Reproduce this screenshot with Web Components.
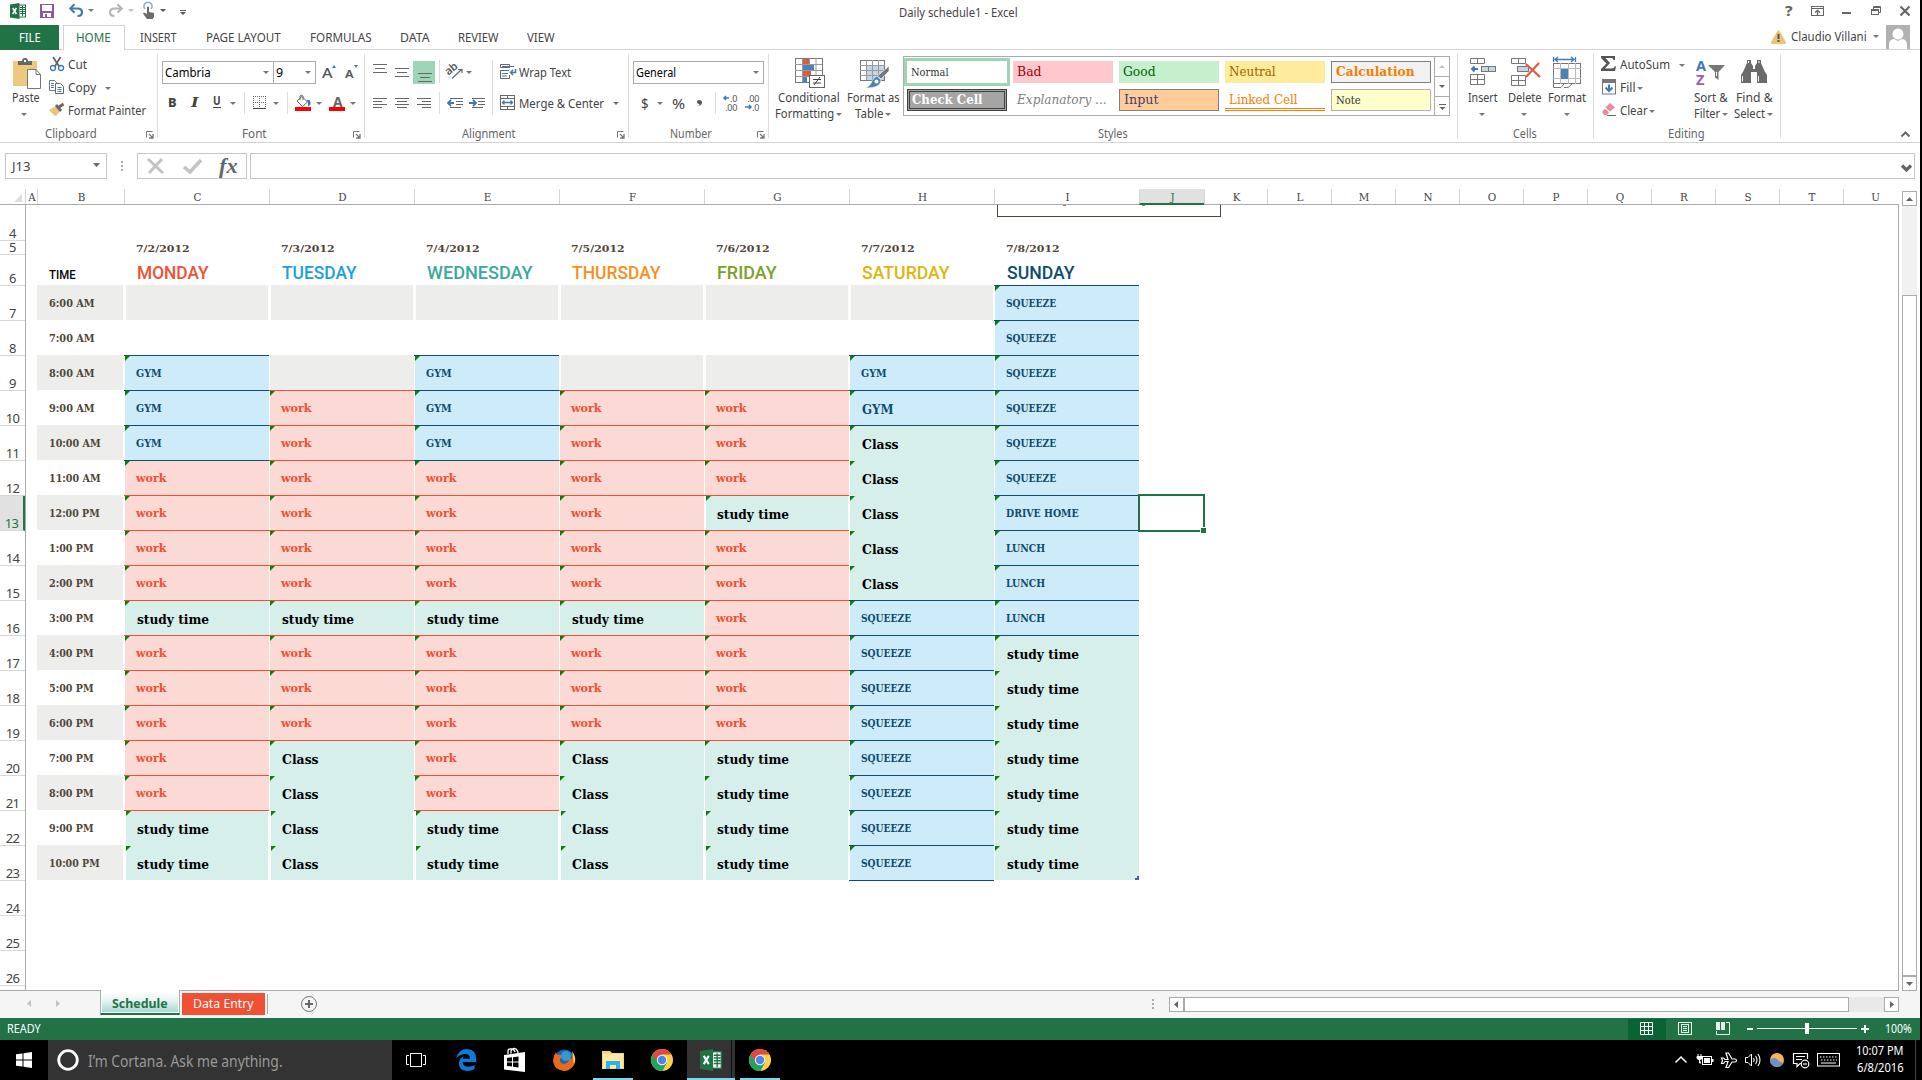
<!DOCTYPE html>
<html lang="en"><head><meta charset="utf-8"><title>Daily schedule1 - Excel</title>
<style>
html,body{margin:0;background:#000;overflow:hidden}
body{width:1922px;height:1080px;font-family:"Noto Sans","Open Sans",sans-serif;font-size:12px;color:#444}
</style></head><body>
<excel-app></excel-app>
<script>
const SERIF='"DejaVu Serif Condensed","DejaVu Serif",serif', SANS='"Noto Sans","Open Sans",sans-serif', GOTHIC='Roboto,"Liberation Sans",sans-serif';
const BASE=`<style>:host{display:block;box-sizing:border-box}*{box-sizing:border-box}.h{display:flex;align-items:flex-start}.v{display:flex;flex-direction:column}.h>*,.v>*{flex:none}svg{display:block;overflow:visible}</style>`;
/* Flow helpers: gaps between neighbours become margins. */
const H=(x0,y0,items)=>{let p=x0;return '<div class="h">'+items.map(([x,y,w,s])=>{const m=x-p;p=x+w;return `<div style="margin-left:${m}px;margin-top:${y-y0}px;width:${w}px">${s}</div>`}).join('')+'</div>'};
const V=(y0,items)=>{let p=y0;return '<div class="v">'+items.map(([y,h,s])=>{const m=y-p;p=y+h;return `<div style="margin-top:${m}px;height:${h}px">${s}</div>`}).join('')+'</div>'};
const T=(x,b,w,t,o={})=>{const s=o.s||12,f=o.f||SANS,k=f===SANS?.388:.344;
 return [x,Math.round(b-8-s*k),w,`<fit-text w="${w}" style='font:${o.i?'italic ':''}${o.b||400} ${s}px/16px ${f};color:${o.c||'#444'}'>${t}</fit-text>`]};
const S=(x,y,w,h,s)=>[x,y,w,`<svg width="${w}" height="${h}" viewBox="0 0 ${w} ${h}">${s}</svg>`];
const AR=(cx,cy,c='#777')=>S(cx-3,cy-1,6,3,`<path d="M0 0H6L3 3Z" fill="${c}"/>`);
const SEP=(x,y,h)=>[x,y,1,`<div style="height:${h}px;background:#dcdcdc"></div>`];
const L=(x1,y1,x2,y2,c='#666',w=1)=>`<path d="M${x1} ${y1}L${x2} ${y2}" stroke="${c}" stroke-width="${w}" fill="none"/>`;
const R=(x,y,w,h,f='none',s='none')=>`<rect x="${x}" y="${y}" width="${w}" height="${h}" fill="${f}" stroke="${s}"/>`;
const P=(d,f='none',s='none',w=1)=>`<path d="${d}" fill="${f}" stroke="${s}" stroke-width="${w}"/>`;
const define=(n,html,after)=>customElements.define(n,class extends HTMLElement{connectedCallback(){if(this.shadowRoot)return;const r=this.attachShadow({mode:'open'});r.innerHTML=BASE+(typeof html==='function'?html(this):html);after&&after(this,r)}});

customElements.define('fit-text',class extends HTMLElement{connectedCallback(){if(this.shadowRoot)return;const w=+this.getAttribute('w');const r=this.attachShadow({mode:'open'});
 r.innerHTML=`<style>:host{display:block;height:16px;white-space:nowrap}span{display:inline-block;transform-origin:0 0}</style><span><slot></slot></span>`;
 if(w){this.style.width=w+'px';const s=r.querySelector('span');const n=s.getBoundingClientRect().width;if(n)s.style.transform=`scaleX(${(w+.6)/n})`}}});

const excelIcon=(w)=>`<svg width="${w}" height="${w}" viewBox="0 0 16 16">${R(8.5,2,7,12,'#fff','#217346')}${P('M10 4.5H15M10 6.5H15M10 8.5H15M10 10.5H15M12.5 3V13','none','#217346')}${P('M0 1.5L9.5 0V16L0 14.5Z','#217346')}${P('M2.7 5L6.4 11M6.4 5L2.7 11','none','#fff',1.5)}</svg>`;

define('title-bar',()=>`<style>:host{height:25px;background:#fff}</style>`+H(0,0,[
 [10,3,16,excelIcon(16)],
 S(40,4,14,14,P('M0 0H14V14H0Z','#8a57ad')+R(2,1,10,6,'#fff')+R(3,9,8,4,'#fff')+R(5,10,2,4,'#8a57ad')),
 S(69,4,14,13,P('M1 4.5H8.5C14.5 4.500 14.500 12 8.500 12','none','#4178b4',2.200)+P('M5.500 .3L1.300 4.500L5.500 8.700','none','#4178b4',2)),AR(91,10),
 S(109,4,14,13,P('M13 4.500H5.500C-.5 4.500 -.5 12 5.500 12','none','#b5b5b5',2.200)+P('M8.500 .3L12.700 4.500L8.500 8.700','none','#b5b5b5',2)),AR(131,10,'#c0c0c0'),
 S(143,3,12,16,P('M2 6A4 4 0 1 1 8 6','none','#8fb4dc',1.800)+P('M4 4Q5 3 6 4V9L11 10V14L9.500 16H4L0 10.500L1 9.500L4 11Z','#6b6b6b')),AR(163,10,'#555'),
 S(180,10,6,5,L(0,.5,6,.5,'#555')+P('M0 2H6L3 5Z','#555')),
 T(899,18,118,'Daily schedule1 - Excel'),
 T(1785,16.500,7,'?',{s:14,b:800,c:'#666'}),
 S(1811,6,13,10,R(.5,.5,12,9,'none','#666')+L(0,2.500,13,2.500)+P('M6.500 9V4.500M4 6.500L6.500 4.300L9 6.500','none','#666',1.300)),
 S(1842,12,9,2,R(0,0,9,2,'#666')),
 S(1871,6,10,10,R(.5,3.500,7,5,'none','#666')+P('M2.500 3V.5H9.500V6.500H8M.5 4.500H7.500M2.500 1.500H9.500','none','#666')),
 S(1900,6,10,10,P('M.5 .5L9.500 9.500M9.500 .5L.5 9.500','none','#666',2.200))]));

define('ribbon-tabs',()=>{const t=(x,w,s,c)=>T(x,42,w,s,{s:13,c:c||'#444'});return `<style>:host{height:25px;background:linear-gradient(#d4d4d4,#d4d4d4) 0 24px/100% 1px no-repeat #fff}.f{background:#217346;height:25px}.a{height:25px;border:1px solid #d4d4d4;border-bottom:0;background:#fff}</style>`+H(0,25,[
 [0,25,59,`<div class="f">${H(0,25,[t(19,21,'FILE','#fff')])}</div>`],
 [63,25,62,`<div class="a">${H(64,26,[t(76,34,'HOME','#217346')])}</div>`],
 t(140,36,'INSERT'),t(206,74,'PAGE LAYOUT'),t(310,61,'FORMULAS'),t(400,29,'DATA'),t(458,40,'REVIEW'),t(527,27,'VIEW'),
 S(1771,30,15,14,P('M7.500 0Q8.500 0 15 12.500Q15 14 14 14H1Q0 14 0 12.500Q6.500 0 7.500 0Z','#edc379')+L(7.500,4,7.500,9,'#555',2)+R(6.500,10,2,2,'#555')),
 T(1791,42,75,'Claudio Villani'),AR(1876,36),
 S(1886,25,24,24,R(0,0,24,24,'#b1b1b1')+`<circle cx="12" cy="9" r="5.500" fill="#fff"/>`+P('M3 24V20Q3 14.500 8 14L12 16L16 14Q21 14.500 21 20V24Z','#fff'))])});

define('ribbon-group',el=>{const [x,w,lx,lw,lau]=el.getAttribute('box').split(',').map(Number);return `<style>:host{width:${w}px;height:92px;display:flex;flex-direction:column}.b{height:75px;flex:none}.s{border-right:1px solid #dcdcdc;height:84px;margin-top:4px;width:${w}px}.b{margin-top:-4px}</style><div class="s"><div class="b"><slot></slot></div>`+
 H(x,125,[T(lx,139,lw,el.getAttribute('label'),{c:'#666'}),...(lau?[S(lau,131,8,8,P('M.5 6.500V.5H6.500','none','#777')+P('M3 3L6.500 6.500M7 3V7H3','none','#777',1.300))]:[])])+`</div>`});

define('combo-box',el=>{const [w,tw,h]=el.getAttribute('d').split(',').map(Number);return `<style>:host{height:${h||23}px;width:${w}px;border:1px solid #ababab;background:#fff}.h{justify-content:space-between;align-items:center;height:100%;padding:0 4px 1px 2px}</style><div class="h"><fit-text w="${tw}" style="color:#000"><slot></slot></fit-text><svg width="6" height="3"><path d="M0 0H6L3 3Z" fill="#777"/></svg></div>`},(el,r)=>{});

define('style-gallery',()=>{
 const c=[['Normal',37,'background:#fff;outline:3px solid #9fd5b7','#333',10.500],['Bad',24,'background:#ffc7ce','#9c0006',13],['Good',32,'background:#c6efce','#006100',13],['Neutral',46,'background:#ffeb9c','#9c6500',13],['Calculation',78,'background:#f2f2f2;border:1px solid #7f7f7f','#fa7d00',13,700],
 ['Check Cell',70,'background:#a5a5a5;border:1px solid #3f3f3f;box-shadow:inset 0 0 0 1px #a5a5a5,inset 0 0 0 2px #3f3f3f','#fff',13,700],['Explanatory ...',89,'','#7f7f7f',13,400,1],['Input',34,'background:#ffcc99;border:1px solid #7f7f7f','#3f3f76',13],['Linked Cell',68,'background:linear-gradient(#ff8001,#ff8001) 0 19px/100% 1px no-repeat,linear-gradient(#ff8001,#ff8001) 0 21px/100% 1px no-repeat','#fa7d00',13],['Note',24,'background:#ffffcc;border:1px solid #b2b2b2','#333',10.500]];
 return `<style>:host{display:flex;width:547px;height:60px;border:1px solid #ababab;background:#fff}.g{display:grid;grid-template-columns:repeat(5,100px);grid-auto-rows:22px;gap:6px;padding:4px 0 0 3px;width:531px}.g>div{padding:2px 0 0 4px;display:flex;overflow:visible}.k{width:15px;border-left:1px solid #ababab}.k div{height:20px;border-bottom:1px solid #ababab;display:grid;place-items:center}.k div:last-child{border:0}</style><div class="g">`+
 c.map(([n,w,st,col,s,b,i])=>`<div style="${st}">${`<fit-text w="${w}" style='margin-top:${st.includes('border:')?0:1}px;font:${i?'italic ':''}${b||400} ${s}px/16px ${SERIF};color:${col}'>${n}</fit-text>`}</div>`).join('')+
 `</div><div class="k"><div><svg width="6" height="3"><path d="M0 3H6L3 0Z" fill="#c0c0c0"/></svg></div><div><svg width="6" height="3"><path d="M0 0H6L3 3Z" fill="#666"/></svg></div><div><svg width="7" height="6"><path d="M0 .5H7" stroke="#666"/><path d="M.5 3H6.500L3.500 6Z" fill="#666"/></svg></div></div>`});

const lines=(x,y,ws,c='#666')=>S(x,y,14,ws.length*4,ws.map(([a,b],i)=>L(a,i*4+.5,b,i*4+.5,c)).join(''));
const G=(box,label,html)=>`<ribbon-group box="${box}" label="${label}">${html}</ribbon-group>`;
define('excel-ribbon',()=>`<style>:host{display:flex;height:93px;background:#fff;border-bottom:1px solid #d4d4d4}</style>`+
 G('0,158,45,51,146','Clipboard',H(0,50,[
  [10,50,34,V(50,[[58,32,H(10,58,[S(13,58,28,31,P('M0 3H24V28H0Z','#edc87e')+P('M5 7V3H9Q9 0 12 0Q15 0 15 3H19V7Z','#666')+R(11,2,2,2,'#fff')+P('M14.500 11.500H23L27.500 16.500V30.500H14.500Z','#fff','#777')+P('M23 11.500V16.500H27.500','none','#777'))])],[90,16,H(10,90,[T(11.500,103,27,'Paste')])],[110,8,H(10,110,[AR(24,114)])]])],
  [49,50,100,V(50,[[56,20,H(49,56,[S(50,57,14,14,P('M3 0L9.500 10M10.500 0L4.500 10','none','#666',1.800)+`<circle cx="3" cy="11" r="2.500" fill="none" stroke="#4178b4" stroke-width="1.300"/><circle cx="11" cy="11" r="2.500" fill="none" stroke="#4178b4" stroke-width="1.300"/>`),T(68,70,18.500,'Cut')])],
   [79,20,H(49,79,[S(49,80,15,14,P('M.5 .5H5.500L7.500 2.500V10.500H.5Z','#fff','#777')+P('M2 3.500H5M2 5.500H5M2 7.500H5','none','#4178b4')+P('M6.500 3.500H11.500L14.500 6.500V13.500H6.500Z','#fff','#666')+P('M8.500 7.500H12.500M8.500 9.500H12.500M8.500 11.500H12.500','none','#4178b4')),T(68,93,27.500,'Copy'),AR(108,88)])],
   [102,20,H(49,102,[S(49,103,16,13,P('M0 7L7 3L11 8L7 13Q5 13 0 7Z','#edc379')+P('M6 3L8 1L13 7L11 9Z','#666')+P('M10 4L14.500 1','none','#666',3)),T(68,116,77.500,'Format Painter')])]])]]))+
 G('158,207,241.5,24,353','Font',V(50,[[61,30,H(158,61,[[162,61,112,'<combo-box d="112,45">Cambria</combo-box>'],[273,61,43,'<combo-box d="43,6.5">9</combo-box>'],
   T(322,78,10,'A',{s:14,b:500,c:'#555'}),S(332,65,4,3,P('M0 3H4L2 0Z','#4178b4')),T(345,78,8,'A',{s:11,b:600,c:'#555'}),S(354,65,4,3,P('M0 0H4L2 3Z','#4178b4'))])],
  [91,28,H(158,91,[T(168,107,8,'B',{s:13,b:800}),T(191,107,7,'I',{s:13,b:600,i:1,f:SERIF}),[213,91,8,`<div style="border-bottom:1px solid #444;height:17px">${H(213,91,[T(213,106,7,'U',{s:12,b:700})])}</div>`],AR(233,103),SEP(244,92,22),
   S(253,96,13,13,`<path d="M0 .5H13M.5 0V13M12.500 0V12M6.500 0V12M0 6.500H13" stroke="#666" stroke-dasharray="1 1"/>`+L(0,12.500,13,12.500,'#444')),AR(276,103),SEP(287,92,22),
   S(295,95,16,16,P('M7 1.500L12.500 7L7.500 11.500L2 6Z','#fff','#666')+P('M5 5V1Q6.500 -.5 8 1V5','none','#666')+P('M11.500 5Q15 4 15.500 7Q16 10 13 11.500Q13.500 7 11.500 5Z','#4178b4')+R(0,12,16,4,'#f00')),AR(319,103),
   [329,92,16,`<div style="border-bottom:4px solid red;height:19px">${H(329,92,[T(333,107,9,'A',{s:14,b:700,c:'#666'})])}</div>`],AR(353,103)])]]))+
 G('365,264,462,53,617','Alignment',H(365,50,[[372,50,117,V(50,[[61,28,H(372,61,[lines(373,64,[[0,14],[2,12],[0,14]]),lines(395,68,[[0,14],[2,12],[0,14]]),
    [413,61,22,`<div style="background:#9fd5b7;height:23px">${H(413,61,[lines(418,73,[[0,14],[2,12],[0,14]])])}</div>`],SEP(439,60,23),
    S(447,64,16,15,`<text x="0" y="8" transform="rotate(-40 6 8)" font-size="11" font-weight="600" fill="#555">ab</text>`+P('M5 14.500L14.500 5.500M11 5.500H15V9','none','#666',1.200)),AR(469,72)])],
   [91,28,H(372,91,[S(373,98,14,10,P('M0 .5H14M0 3.500H9M0 6.500H14M0 9.500H9','none','#666')),S(395,98,14,10,P('M0 .5H14M2 3.500H12M0 6.500H14M2 9.500H12','none','#666')),S(417,98,14,10,P('M0 .5H14M5 3.500H14M0 6.500H14M5 9.500H14','none','#666')),SEP(439,92,22),
    ...[447,469].map((x,i)=>S(x,98,16,11,P('M3 .5H16M9 3.500H16M9 6.500H16M3 9.500H14','none','#666')+P(i?'M0 5H7M4 2L7 5L4 8':'M7 5H1M4 2L1 5L4 8','none','#4178b4',1.800)))])]])],
   SEP(492,60,55),[498,50,128,V(50,[[61,28,H(498,61,[S(500,64,16,15,P('M.5 .5H9.500V3.500H.5ZM.5 6.500V14.500H9.500V11M.5 6.500H9','none','#666')+P('M2 2.500H14M2 9.500H8M2 12H7','none','#4178b4',1.200)+P('M15.500 5V8.500H11M13 6L10.500 8.500L13 11','none','#4178b4',1.500)),T(519,78,51.500,'Wrap Text')])],
    [91,28,H(498,91,[S(500,95,15,15,R(.5,.5,14,14,'#fff','#666')+P('M.5 3.500H14.500M.5 11.500H14.500M7.500 0V3.500M7.500 11.500V15','none','#666')+P('M2 7.500H13M4.500 5.500L2.500 7.500L4.500 9.500M10.500 5.500L12.500 7.500L10.500 9.500','none','#4178b4',1.300)),T(519,109,84.500,'Merge &amp; Center'),AR(616,103)])]])]]))+
 G('629,140,670,41,757','Number',V(50,[[61,28,H(629,61,[[633,61,131,'<combo-box d="131,39.5">General</combo-box>']])],[91,28,H(629,91,[T(641,109,7,'$',{s:15}),AR(660,103),T(672,109,12.500,'%',{s:15}),S(697,100,6,7,P('M2 0Q5 0 5 2.500Q5 5 1 6Q2.500 5 2.500 4Q0 4 0 2Q0 0 2 0Z','#555')),SEP(715,92,22),
   ...[723,745].map((x,i)=>[x,94,15,`<div style="font-size:9px;line-height:9px;letter-spacing:-.3px;color:#555"><div style="display:flex;justify-content:flex-end;width:14px">${i?'':`<svg width="7" height="7" style="margin-right:0"><path d="M6 4H1M3 2L1 4L3 6" stroke="#4178b4" stroke-width="1.500" fill="none"/></svg>`}${i?'.00':'.0'}</div><div style="display:flex;justify-content:flex-end;width:14px">${i?`<svg width="7" height="7"><path d="M0 4H6M4 2L6 4L4 6" stroke="#4178b4" stroke-width="1.500" fill="none"/></svg>`:''}${i?'.0':'.00'}</div></div>`])])]]))+
 G('769,689,1098,29,0','Styles',H(769,50,[
  [773,50,70,V(50,[[58,32,H(773,58,[S(795,58,30,30,R(.5,.5,27,24,'#fff','#777')+P('M0 6.500H27M0 12.500H27M0 18.500H27M7.500 0V24M14.500 0V24M21 0V24','none','#999')+R(8,1,6,5,'#d9603b')+R(8,7,11,5,'#4a82bd')+R(8,13,8,5,'#d9603b')+R(8,19,4,6,'#4a82bd')+R(14.500,17.500,15,12,'#fff','#666')+P('M18 21.500H26M18 25H26M25 19L19 27','none','#444'))])],[90,16,H(773,90,[T(778,103,61,'Conditional')])],[106,16,H(773,106,[T(775,119,58.500,'Formatting'),AR(839,114)])]])],
  [846,50,54,V(50,[[58,32,H(846,58,[S(860,60,29,29,R(6,5,18,15,'#c3d5ea')+R(.5,.5,24,20,'none','#777')+P('M0 5.500H25M0 10.500H25M0 15.500H25M6.500 0V20M12.500 0V20M18.500 0V20','none','#999')+P('M29 6V11L21 19L17.500 16Z','#777','#fff',.6)+P('M17 16L21 20Q21 28 6 28Q11 25 12 21Q14 17 17 16Z','#4a82bd','#fff',.6)+`<circle cx="16.500" cy="21.500" r="2" fill="#fff"/>`)])],[90,16,H(846,90,[T(847,103,52,'Format as')])],[106,16,H(846,106,[T(855,119,28,'Table'),AR(888,114)])]])],
  [903,56,547,'<style-gallery></style-gallery>']]))+
 G('1458,136,1513,23,0','Cells',H(1458,50,[
  [1466,50,34,V(50,[[58,32,H(1466,58,[S(1470,58,26,27,P('M.5 .5H14.500V5.500H.5ZM7.500 0V6M.5 16.500H14.500V26.500H.5ZM.5 21.500H14.500M7.500 16V27','#fff','#777')+R(11.500,8.500,14,5,'#c3d5ea','#777')+L(18.500,8,18.500,14,'#777')+P('M8 11H2M4.500 8.500L2 11L4.500 13.500','none','#4178b4',2))])],[90,16,H(1466,90,[T(1468,103,29,'Insert')])],[110,8,H(1466,110,[AR(1482,114)])]])],
  [1506,50,36,V(50,[[58,32,H(1506,58,[S(1511,58,29,28,P('M.5 .5H14.500V5.500H.5ZM7.500 0V6M.5 17.500H14.500V27.500H.5ZM.5 22.500H14.500M7.500 17V28','#fff','#777')+R(6.500,8.500,11,5,'#c3d5ea','#777')+P('M15 6L29 19M28 5L15 19','none','#d9603b',2.200))])],[90,16,H(1506,90,[T(1508,103,33,'Delete')])],[110,8,H(1506,110,[AR(1524,114)])]])],
  [1546,50,42,V(50,[[57,33,H(1546,57,[S(1553,57,28,31,P('M.5 0V5M22.500 0V5M2 2.500H21M5 0L2 2.500L5 5M18 0L21 2.500L18 5','none','#4178b4',1.300)+R(.5,6.500,27,20,'#fff','#777')+P('M0 11.500H28M0 21.500H28M7.500 6V27M15.500 6V27M22.500 6V27','none','#bbb')+R(8,12,7,10,'#4a82bd')+P('M.5 26V30.500H8L11 27M11 30.500H15L19 27','none','#777'))])],[90,16,H(1546,90,[T(1548,103,37.500,'Format')])],[110,8,H(1546,110,[AR(1567,114)])]])]]))+
 G('1594,187,1668,36,0','Editing',H(1594,50,[
  [1600,50,88,V(50,[[56,20,H(1600,56,[S(1601,56,15,15,P('M0 0H14V4H12.500Q12.500 2 10 2H4.500L9 7L4 12.500H11Q13 12.500 13.500 10.500H15L14 15H0V13L5.500 7.500L0 2Z','#555')),T(1620,70,49.500,'AutoSum'),AR(1682,65)])],[79,20,H(1600,79,[S(1602,79,14,16,R(.5,.5,13,14.500,'#fff','#777')+R(0,0,14,4,'#777')+P('M7 5.500V12M3.500 8.500L7 12L10.500 8.500','none','#4178b4',2)),T(1620,93,15,'Fill'),AR(1640,88)])],[102,20,H(1600,102,[S(1602,103,14,13,P('M8 0L13 4.500L8 8.500L3.500 4.500Z','#ea8a9a')+P('M3 5.500L7 9.500L5 12H2L0 9Z','#ea8a9a')+L(5,12.500,14,12.500)),T(1620,116,27,'Clear'),AR(1652,111)])]])],
  [1693,50,36,V(50,[[58,32,H(1693,58,[[1696,58,11,`<div style='font:700 14.500px/14px ${SANS};height:30px'><div style="color:#4178b4">A</div><div style="color:#9660b8">Z</div></div>`],S(1708,64,17,17,P('M0 1H17L10.500 8V16L7 13.500V8Z','#777')+P('M8.500 8V12','none','#fff'))])],[90,16,H(1693,90,[T(1694,103,33,'Sort &amp;')])],[106,16,H(1693,106,[T(1694,119,25.500,'Filter'),AR(1725,114)])]])],
  [1733,50,42,V(50,[[58,32,H(1733,58,[S(1741,60,26,23,P('M6 0H10V3L12 6V9H14V6L16 3V0H20V3L24 12L26 15V23H16V12H10V23H0V15L2 12L6 3Z','#6a6a6a')+P('M1.500 16V21.500M17.500 16V21.500M7.500 1V3M18 1V3','none','#fff'))])],[90,16,H(1733,90,[T(1736,103,36,'Find &amp;')])],[106,16,H(1733,106,[T(1734,119,30.500,'Select'),AR(1770,114)])]])]]))+
 H(1781,50,[S(1901,131,9,6,P('M.5 5.500L4.500 1.500L8.500 5.500','none','#666',2))]));

define('formula-bar',()=>`<style>:host{height:46px;background:#fff}.b{border:1px solid #c6c6c6;height:26px;background:#fff}</style>`+H(0,143,[
 [5,153,102,`<div class="b">${H(6,154,[T(12,172,18,'J13'),S(93,163,7,4,P('M0 0H7L3.500 4Z','#666'))])}</div>`],
 S(121,161,2,10,R(0,0,2,2,'#aaa')+R(0,4,2,2,'#aaa')+R(0,8,2,2,'#aaa')),
 [137,153,110,`<div class="b">${H(138,154,[S(147,158,17,16,P('M1 1L16 15M15 1L2 15','none','#c3c3c3',3)),S(183,159,19,15,P('M1 8L7 13L18 1','none','#c3c3c3',3.500)),T(219,173,18,'fx',{s:21,b:700,i:1,f:'"Liberation Serif",serif',c:'#666'})])}</div>`],
 [250,153,1665,`<div class="b">${H(251,154,[S(1901,164,11,8,P('M1 1.500L5.500 6L10 1.500','none','#666',3.200))])}</div>`]]));

const COLS=[['A',25,12],['B',37,87],['C',124,145],['D',269,145],['E',414,145],['F',559,145],['G',704,145],['H',849,145],['I',994,145],['J',1139,65],...'KLMNOPQRSTU'.split('').map((c,i)=>[c,1204+i*64-(i?1:0),64+(i?0:-1)])];
COLS[COLS.length-1][2]=55;
define('column-headers',()=>`<style>:host{height:16px;display:flex;background:#fff;border-bottom:1px solid #ababab;font:11.500px/14px ${SERIF};width:1899px}div{height:15px;border-left:1px solid #d4d4d4;text-align:center;flex:none;padding:2px 0 0 1px;line-height:13px}.k{border:0;width:25px;padding:5px 0 0 14px}.s{background:#e1e1e1;color:#217346;height:16px;border-bottom:2px solid #217346}</style><div class="k"><svg width="8" height="8"><path d="M8 0V8H0Z" fill="#dcdcdc"/></svg></div>`+
 COLS.map(([c,x,w])=>`<div class="${c==='J'?'s':''}" style="width:${w}px${c==='U'?';padding-left:9px':''}">${c}</div>`).join(''));

define('row-headers',()=>`<style>:host{width:26px;border-right:1px solid #ababab;font:13px/13px ${SANS};height:785px;overflow:hidden;flex:none}div{display:flex;align-items:flex-end;justify-content:center;height:35px;border-bottom:1px solid #d8d8d8;letter-spacing:-.6px}.s{background:#e1e1e1;color:#217346;border-right:2px solid #217346}</style>`+
 Array.from({length:23},(_,i)=>i+4).map(n=>`<div class="${n===13?'s':''}" style="height:${n===4?36:n===5?14:n===6?31:35}px">${n}</div>`).join(''));

const KIND={w:['work',30,'#fbdad5','#f05033','#f05033'],g:['GYM',25,'#ceebf9','#0e4d6f','#0e4d6f'],G:['GYM',31,'#ceebf9','#0e4d6f','#0e4d6f'],q:['SQUEEZE',49.500,'#ceebf9','#0e4d6f','#0e4d6f'],d:['DRIVE HOME',72,'#ceebf9','#0e4d6f','#0e4d6f'],l:['LUNCH',38.500,'#ceebf9','#0e4d6f','#0e4d6f'],s:['study time',71.500,'#d6efeb','#000',''],c:['Class',36,'#d6efeb','#000',''],_:['',0,'','','']};
const PLAN=['__gggwwwwswwwwwss','___wwwwwwswwwcccc','__gggwwwwswwwwwss','___wwwwwwswwwcccc','___wwwswwwwwwssss','__gGcccccqqqqqqqq','qqqqqqdlllsssssss'];
define('schedule-cell',el=>{const k=el.getAttribute('kind'),up=el.getAttribute('up'),row=+el.getAttribute('row'),col=+el.getAttribute('col');
 const [t,w,f,tc,lc]=KIND[k];const line=(KIND[up]||KIND._)[4]||lc;const fill=f||(row%2?'#ededeb':'#fff');const wide=row===7&&!f||row===9&&!f&&col>2||row>=22&&'sc'.includes(k)&&col<6||(row===13&&k==='s');const big='Gsc'.includes(k);
 return `<style>:host{width:145px;height:35px;background:${line?`linear-gradient(${line},${line}) 0 0/100% 1px no-repeat,`:''}linear-gradient(#fff,#fff) 0 0/${wide?2:1}px 100% no-repeat,${wide?'linear-gradient(#fff,#fff) 144px 0/1px 100% no-repeat,':''}${fill};display:flex;flex:none}svg{flex:none;margin:1px 0 0 ${wide?2:1}px}fit-text{margin:${big?12:11}px 0 0 ${big?7:6}px}</style>`+
 (t?`<svg width="5" height="5"><path d="M0 0H5L0 5Z" fill="#0a800a"/></svg><fit-text w="${w}" style='font:700 ${big?13:11}px/16px ${SERIF};color:${tc}${wide?';margin-left:6px':''}'>${t}</fit-text>`:'')});

define('sheet-grid',()=>{const days=[['MONDAY',71,'#f05033'],['TUESDAY',74,'#1c9fe0'],['WEDNESDAY',105,'#3ba99c'],['THURSDAY',88,'#f78f1e'],['FRIDAY',59,'#7aa228'],['SATURDAY',87,'#e0b50f'],['SUNDAY',67,'#0e4d6f']];
 const hrs=['6:00 AM','7:00 AM','8:00 AM','9:00 AM','10:00 AM','11:00 AM','12:00 PM','1:00 PM','2:00 PM','3:00 PM','4:00 PM','5:00 PM','6:00 PM','7:00 PM','8:00 PM','9:00 PM','10:00 PM'];
 return `<style>:host{position:relative;width:1873px;height:785px;background:#fff;border-right:1px solid #ababab;overflow:hidden;flex:none}.r{display:flex;padding-left:11px;height:35px}.t{width:87px;height:35px;border-right:1px solid #fff;flex:none;padding:11px 0 0 12px}.box{height:12px;width:224px;border:1px solid #4e4638;border-top:0}.sel{position:absolute;left:1112px;top:289px;width:67px;height:38px;border:2px solid #217346}.hd{position:absolute;left:1174px;top:322px;width:7px;height:7px;background:#217346;border:1px solid #fff}.end{height:1px;background:#0e4d6f;width:145px;margin-left:823px}.cr{position:absolute;left:1109px;top:671px}</style>`+
 H(26,205,[[997,205,224,`<div class="box">${H(998,205,[[1063,205,3,'<div style="height:1px;background:#888"></div>'],[1142,205,3,'<div style="height:1px;background:#888"></div>']])}</div>`]])+
 `<div style="height:68px">`+V(217,[[240,17,H(26,240,days.map((d,i)=>T(136+i*145,252,53,`7/${i+2}/2012`,{s:10,b:700,f:SERIF,c:'#4e4638'})))],[260,25,H(26,260,[T(49,279,26,'TIME',{s:13,b:500,f:GOTHIC,c:'#000'}),...days.map((d,i)=>T(137+i*145,279,d[1],d[0],{s:18,b:500,f:GOTHIC,c:d[2]}))])]])+`</div>`+
 hrs.map((h,r)=>`<div class="r"><div class="t" style="background:${r%2?'#fff':'#ededeb'}"><fit-text w="${(h.length>7?51:45)-(h.includes('P')?1:0)}" style='font:700 11px/16px ${SERIF};color:#4e4638'>${h}</fit-text></div>${PLAN.map((p,c)=>`<schedule-cell kind="${p[r]}" up="${r?p[r-1]:'_'}" row="${r+7}" col="${c}"></schedule-cell>`).join('')}</div>`).join('')+
 `<div class="end"></div><svg class="cr" width="4" height="4"><path d="M2 0H4V4H0V2H2Z" fill="#4a5bb0"/></svg><div class="sel"></div><div class="hd"></div>`});

define('scroll-v',()=>`<style>:host{width:21px;height:802px;padding:2px 3px 0 3px;background:#fff}.b{height:15px;border:1px solid #ababab;display:grid;place-items:center;background:#fff}.tr{height:89px;background:#f1f1f1}.th{height:681px;border:1px solid #ababab}</style><div class="b"><svg width="7" height="4"><path d="M0 4H7L3.500 0Z" fill="#666"/></svg></div><div class="tr"></div><div class="th"></div><div class="b"><svg width="7" height="4"><path d="M0 0H7L3.500 4Z" fill="#666"/></svg></div>`);

define('sheet-tabs',()=>`<style>:host{height:28px;background:linear-gradient(#ababab,#ababab) 0 0/1899px 1px no-repeat #f5f5f5}.s{height:25px;background:#fff;border:1px solid #ababab;border-top:0;border-bottom:2px solid #217346;padding:2px 1px 1px}.g{height:20px;background:linear-gradient(#fff,#e8f4f3 40%,#a9d9d5)}.d{height:22px;background:#f05033}.b{height:15px;border:1px solid #ababab;background:#fff}</style>`+H(0,990,[
 S(27,1000,4,7,P('M4 0V7L0 3.500Z','#c3c3c3')),S(56,1000,4,7,P('M0 0V7L4 3.500Z','#c3c3c3')),
 [100,990,80,`<div class="s"><div class="g">${H(102,992,[T(112,1008,55,'Schedule',{s:13,b:700,c:'#217346'})])}</div></div>`],
 [182,993,83,`<div class="d">${H(182,993,[T(193,1008,60,'Data Entry',{s:13,c:'#fff'})])}</div>`],
 [267,994,1,'<div style="height:20px;background:#ababab"></div>'],
 S(301,996,16,16,`<circle cx="8" cy="8" r="7.500" fill="none" stroke="#777"/>`+P('M8 4V12M4 8H12','none','#666',2)),
 S(1152,999,2,10,R(0,0,2,2,'#aaa')+R(0,4,2,2,'#aaa')+R(0,8,2,2,'#aaa')),
 [1169,997,15,`<div class="b">${H(1170,998,[S(1174,1001,4,7,P('M4 0V7L0 3.500Z','#666'))])}</div>`],
 [1184,997,665,'<div class="b"></div>'],[1849,997,35,'<div style="height:15px;background:#e9e9e9"></div>'],
 [1884,997,15,`<div class="b">${H(1885,998,[S(1890,1001,4,7,P('M0 0V7L4 3.500Z','#666'))])}</div>`]]));

define('status-bar',()=>`<style>:host{height:22px;background:#217346}</style>`+H(0,1018,[
 T(7,1034,33,'READY',{c:'#fff'}),
 [1628,1019,38,`<div style="height:21px;background:#0a6332">${H(1628,1019,[S(1640,1022,13,13,P('M.5 .5H12.500V12.500H.5ZM0 4.500H13M0 8.500H13M4.500 0V13M8.500 0V13','none','#fff'))])}</div>`],
 S(1678,1022,14,13,R(.5,.5,13,12,'none','#e8f0eb')+R(3.500,2.500,7,8,'none','#e8f0eb')+P('M5 4.500H9M5 6.500H9M5 8.500H9','none','#e8f0eb')),
 S(1716,1022,14,13,R(0,0,4,8,'#e8f0eb')+R(5,0,4,8,'#e8f0eb')+P('M10 .5H13.500V12.500H.5V9','none','#e8f0eb')),
 S(1747,1028,6,2,R(0,0,6,2,'#fff')),
 S(1757,1023,100,11,L(0,5.500,100,5.500,'#fff')+R(48,0,4,11,'#fff')),
 S(1861,1025,8,8,P('M4 0V8M0 4H8','none','#fff',2)),T(1885,1034,26,'100%',{c:'#fff'})]));

const chrome=`<svg width="22" height="22" viewBox="0 0 22 22"><circle cx="11" cy="11" r="11" fill="#fdd048"/><path d="M11 11L1.500 5.500A11 11 0 0 0 11.500 22L16 13.500Z" fill="#25a35a"/><path d="M1.500 5.500A11 11 0 0 1 20.500 5.500H11L6.500 13.500Z" fill="#dd4b3e"/><circle cx="11" cy="11" r="5.200" fill="#f3f3f3"/><circle cx="11" cy="11" r="4.200" fill="#4a86f0"/></svg>`;
const under='<div style="height:2px;background:#76d7f7"></div>';
const app=(ix,ww,x0,w,svg,iy,ih)=>[x0,1040,w,V(1040,[[iy,ih,H(x0,0,[[ix,0,ww,svg]])],[1078,2,under]])];
define('task-bar',()=>`<style>:host{height:40px;background:#000}.c{height:40px;background:#333}</style>`+H(0,1040,[
 S(16,1052,16,16,P('M0 2.300L6.500 1.400V7.500H0ZM7.500 1.200L16 0V7.500H7.500ZM0 8.500H6.500V14.600L0 13.700ZM7.500 8.500H16V16L7.500 14.800Z','#fff')),
 [48,1040,344,`<div class="c">${H(48,1040,[S(57,1049,22,22,`<circle cx="11" cy="11" r="9.300" fill="none" stroke="#fff" stroke-width="2.800"/>`),T(88,1067,194,'I’m Cortana. Ask me anything.',{s:15.500,c:'#999'})])}</div>`],
 S(406,1053,20,14,R(4.500,.5,11,13,'none','#fff')+P('M3 2.500H.5V11.500H3M17 2.500H19.500V11.500H17','none','#fff')),
 S(456,1049,20,22,P('M0 9.500Q2.500 0 11 0Q20 0 20 10V13H6.500Q7 17.500 12 17.700Q16 17.700 18.500 16V20Q15 22 11 22Q2.500 21.500 3 13.500Q3.500 9 8 6.500Q6.500 8 6.500 9.700H14Q14 5 9.500 5Q4 5 0 9.500Z','#0a7bd8')),
 S(504,1048,21,24,P('M0 7L21 4V24L0 21.500Z','#fff')+P('M4 6V3Q4 1 6 1Q10 0 11 4M7 5.500V3Q9 -1 12 1Q14 3 14 5','none','#fff',1.300)+P('M3 10L8 9.300V13.500H3ZM9 9.200L14.500 8.500V13.500H9ZM3 14.500H8V18.600L3 18ZM9 14.500H14.500V19.500L9 18.800Z','#000')),
 S(553,1049,22,22,`<circle cx="11.500" cy="10.500" r="10" fill="#1668b2"/><circle cx="13" cy="7" r="5" fill="#2e9bd8"/>`+P('M20 4Q24 10 21 16Q17 22 11 22Q1 21 0 12Q0 7 3 3L4 6Q7 5 9 7L7 10Q6 14 11 15Q16 14 17 8Q18 10 18 11Q20 8 20 4Z','#e86b1c')+P('M19 2Q24 9 21 15Q20 9 19 2Z','#fbd24c')),
 app(602,22,593,40,`<svg width="22" height="19">${P('M0 0H8L10 2H22V18H0Z','#f7d774')}${P('M1 3H21V17H1Z','#ffe9a6')}${P('M4 18V10H18V18H14V14H8V18Z','#2bb3ec')}</svg>`,1051,19),
 [651,1049,22,chrome],
 [687,1040,48,`<div style="background:linear-gradient(#111,#111) 44px 0/1px 100% no-repeat #333;height:40px">${V(1040,[[1049,22,H(687,0,[[700,0,22,excelIcon(22)]])],[1078,2,under]])}</div>`],
 app(749,22,740,40,chrome,1049,22),
 S(1675,1056,12,7,P('M.5 6.500L6 1L11.500 6.500','none','#fff',1.500)),
 S(1697,1054,16,12,R(5.500,2.500,9,8,'none','#fff')+R(7,4,6,5,'#fff')+R(15,5,1.500,3,'#fff')+P('M1 0V2M4 0V2M0 2.500H5V4Q5 5.500 2.500 5.500Q0 5.500 0 4ZM2.500 5V9H4','#fff','#fff')),
 S(1721,1052,16,16,P('M.5 6L2.500 6L4 7.500H7L5 1H7.500L11 7H14Q15.500 7 15.500 8.500Q15.500 10 14 10H11L7.500 15.500H5L7 9.500H4L2.500 11.500H.5L1.500 8.500Z','none','#fff',1.200)),
 S(1745,1053,16,14,P('M.5 4.500H3L6.500 1V13L3 9.500H.5Z','none','#fff')+P('M8.500 5Q10 7 8.500 9M10.500 3Q13.500 7 10.500 11M13 1Q17 7 13 13','none','#fff',1.100)),
 S(1770,1053,14,14,`<circle cx="7" cy="7" r="7" fill="#f6b556"/>`+P('M0 7Q4 3 8 7Q11 10 13.500 10Q11 14 7 14Q1 14 0 7Z','#6f8fc8')),
 S(1793,1053,16,15,P('M14.500 6V.5H.5V10.500H4V13.500L7 10.500H8M3 3.500H12M3 6.500H9','none','#fff',1.200)+`<circle cx="12" cy="11" r="3.800" fill="#000" stroke="#fff" stroke-width="1.200"/>`+L(10,11,14,11,'#fff',1.200)),
 S(1817,1053,23,14,R(.5,.5,22,12.500,'none','#fff')+`<path d="M3 4H20M4 7H20" stroke="#fff" stroke-dasharray="1.500 1.500"/>`+L(4,10,19,10,'#fff')),
 [1856,1040,50,V(1040,[[1040,18,H(1856,1040,[T(1856,1056,47,'10:07 PM',{s:12.500,c:'#fff'})])],[1058,18,H(1856,1058,[T(1857,1073,46,'6/8/2016',{s:12.500,c:'#fff'})])]])],
 [1915,1040,1,'<div style="height:40px;background:#444"></div>']]));

define('excel-app',`<style>:host{width:1920px;height:1080px;background:#000}.m{display:flex;height:801px;background:#fff}.l{width:1899px}.g{display:flex}</style>
<title-bar></title-bar><ribbon-tabs></ribbon-tabs><excel-ribbon></excel-ribbon><formula-bar></formula-bar>
<div class="m"><div class="l"><column-headers></column-headers><div class="g"><row-headers></row-headers><sheet-grid></sheet-grid></div></div><scroll-v></scroll-v></div>
<sheet-tabs></sheet-tabs><status-bar></status-bar><task-bar></task-bar>`);
</script></body></html>
